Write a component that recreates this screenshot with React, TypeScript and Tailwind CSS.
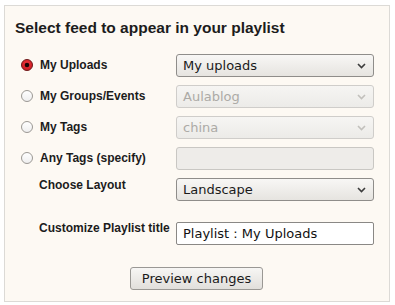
import React from "react";

const ff = { fontFamily: '"Liberation Sans", Arial, sans-serif' };
const dj = { fontFamily: '"DejaVu Sans", sans-serif' };

function Radio({ checked }: { checked?: boolean }) {
  return (
    <svg width="12" height="12" viewBox="0 0 12 12" className="shrink-0">
      <defs>
        <linearGradient id="rg" x1="0" y1="0" x2="0" y2="1">
          <stop offset="0" stopColor="#ffffff" />
          <stop offset="1" stopColor="#eeeeee" />
        </linearGradient>
        <radialGradient id="rr" cx="0.5" cy="0.4" r="0.6">
          <stop offset="0" stopColor="#f0393f" />
          <stop offset="1" stopColor="#c9181f" />
        </radialGradient>
      </defs>
      {checked ? (
        <>
          <circle cx="6" cy="6" r="5.5" fill="url(#rr)" stroke="#6e1b1b" strokeWidth="1" />
          <circle cx="6" cy="6" r="2.3" fill="#1a0606" />
        </>
      ) : (
        <circle cx="6" cy="6" r="5.5" fill="url(#rg)" stroke="#9b9893" strokeWidth="1" />
      )}
    </svg>
  );
}

function Chevron({ color }: { color: string }) {
  return (
    <svg width="9" height="6" viewBox="0 0 9 6" className="shrink-0">
      <path d="M1 1 L4.5 4.5 L8 1" fill="none" stroke={color} strokeWidth="1.6" />
    </svg>
  );
}

function Select({ value, disabled }: { value: string; disabled?: boolean }) {
  return (
    <div
      className={
        "flex h-[23px] w-[198px] items-center justify-between rounded-[3px] border pl-[6px] pr-[7px] text-[13px] " +
        (disabled
          ? "border-[#cfcdca] bg-gradient-to-b from-[#f6f5f3] to-[#ecebe8] text-[#acaaa6]"
          : "border-[#8f8d8a] bg-gradient-to-b from-[#f8f7f5] to-[#e6e4e0] text-[#1a1a1a]")
      }
      style={dj}
    >
      <span className="leading-[15px]">{value}</span>
      <Chevron color={disabled ? "#c2c0bc" : "#3c3c3c"} />
    </div>
  );
}

function Label({ text, radio, checked, mt }: { text: string; radio?: boolean; checked?: boolean; mt: string }) {
  return (
    <div className={"flex w-[161px] shrink-0 items-center " + mt}>
      {radio ? (
        <div className="ml-[6px] mr-[7px] flex items-center">
          <Radio checked={checked} />
        </div>
      ) : (
        <div className="w-[24px] shrink-0" />
      )}
      <span className="text-[12px] font-bold leading-[14px] text-[#1c1c1c]" style={ff}>
        {text}
      </span>
    </div>
  );
}

export default function App() {
  return (
    <div className="h-[305px] w-[395px] bg-white pl-[4px] pt-[5px]">
      <div className="h-[297px] w-[386px] border border-[#dcdad6] bg-[#fdf9f3] pl-[10px] pt-[13px]">
        <div className="text-[15.5px] font-bold leading-[18px] text-[#1c1c1c]" style={ff}>
          Select feed to appear in your playlist
        </div>
        <div className="mt-[17px] flex flex-col gap-[8px]">
          <div className="flex items-start">
            <Label text="My Uploads" radio checked mt="mt-[4px]" />
            <Select value="My uploads" />
          </div>
          <div className="flex items-start">
            <Label text="My Groups/Events" radio mt="mt-[4px]" />
            <Select value="Aulablog" disabled />
          </div>
          <div className="flex items-start">
            <Label text="My Tags" radio mt="mt-[4px]" />
            <Select value="china" disabled />
          </div>
          <div className="flex items-start">
            <Label text="Any Tags (specify)" radio mt="mt-[4px]" />
            <div className="h-[23px] w-[198px] rounded-[3px] border border-[#c9c7c3] bg-[#eeece9]" />
          </div>
          <div className="flex items-start">
            <Label text="Choose Layout" mt="mt-[0px]" />
            <Select value="Landscape" />
          </div>
        </div>
        <div className="mt-[21px] flex items-start">
          <Label text="Customize Playlist title" mt="-mt-[1px]" />
          <div
            className="flex h-[23px] w-[198px] items-center rounded-[2px] border border-[#8a8885] bg-white pl-[6px] text-[13px] text-[#111]"
            style={dj}
          >
            Playlist : My Uploads
          </div>
        </div>
        <div className="mt-[22px] flex justify-center pr-[11px]">
          <button
            className="h-[23px] w-[133px] rounded-[3px] border border-[#9a9894] bg-gradient-to-b from-[#f7f6f4] to-[#e1dfdb] text-[13px] leading-[15px] text-[#1a1a1a]"
            style={dj}
          >
            Preview changes
          </button>
        </div>
      </div>
    </div>
  );
}
